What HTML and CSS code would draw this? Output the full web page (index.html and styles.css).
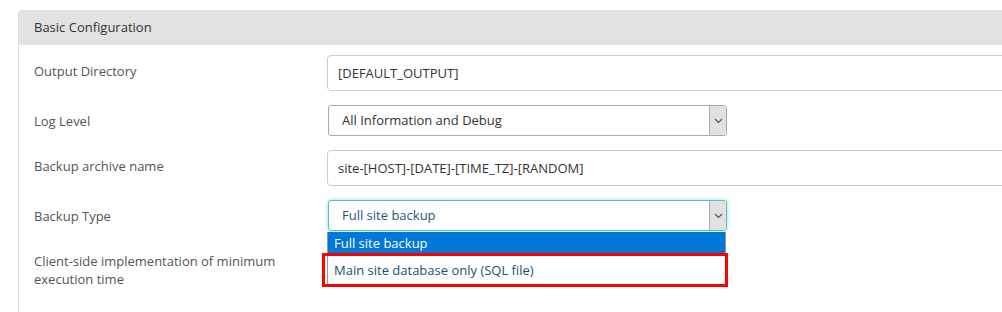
FILE: index.html
```html
<!DOCTYPE html>
<html lang="en">
<head>
    <meta charset="UTF-8">
    <title>Basic Configuration</title>
    <link rel="stylesheet" href="styles.css">
</head>
<body>
    <div class="panel">
        <div class="panel-heading">Basic Configuration</div>
        <div class="panel-body">
            <div class="form-row">
                <label class="form-label">Output Directory</label>
                <div class="form-control input-text">[DEFAULT_OUTPUT]</div>
            </div>
            <div class="form-row">
                <label class="form-label">Log Level</label>
                <div class="form-control select">
                    <span class="select-value">All Information and Debug</span>
                    <span class="select-arrow"><svg width="9" height="6" viewBox="0 0 9 6"><path d="M1 1 L4.5 4.5 L8 1" fill="none" stroke="#555" stroke-width="1.1"/></svg></span>
                </div>
            </div>
            <div class="form-row">
                <label class="form-label">Backup archive name</label>
                <div class="form-control input-text">site-[HOST]-[DATE]-[TIME_TZ]-[RANDOM]</div>
            </div>
            <div class="form-row">
                <label class="form-label">Backup Type</label>
                <div class="select-wrap">
                    <div class="form-control select focused">
                        <span class="select-value">Full site backup</span>
                        <span class="select-arrow"><svg width="9" height="6" viewBox="0 0 9 6"><path d="M1 1 L4.5 4.5 L8 1" fill="none" stroke="#555" stroke-width="1.1"/></svg></span>
                    </div>
                    <ul class="dropdown">
                        <li class="option selected">Full site backup</li>
                        <li class="option marked">Main site database only (SQL file)</li>
                    </ul>
                </div>
            </div>
            <div class="form-row">
                <label class="form-label">Client-side implementation of minimum execution time</label>
            </div>
        </div>
    </div>
</body>
</html>
```

FILE: styles.css
```css
* {
    margin: 0;
    padding: 0;
    box-sizing: border-box;
    font-family: 'Open Sans', 'Liberation Sans', sans-serif;
}

html, body {
    overflow: hidden;
}

body {
    background-color: #fff;
    padding: 10px 0 0 18px;
    height: 312px;
    font-size: 13px;
    color: #555;
}

.panel {
    width: 100%;
    height: 302px;
    border-left: 1px solid #ddd;
    border-top-left-radius: 4px;
    overflow: hidden;
}

.panel-heading {
    background-color: #e2e2e2;
    height: 35px;
    line-height: 35px;
    padding-left: 15px;
    color: #333;
}

.panel-body {
    padding: 10px 0 0 15px;
    display: flex;
    flex-direction: column;
    gap: 14px;
}

.form-row {
    display: flex;
    align-items: flex-start;
}

.form-label {
    width: 293px;
    flex-shrink: 0;
    padding: 7px 40px 0 0;
    line-height: 18px;
}

.form-control {
    border: 1px solid #ccc;
    border-radius: 4px;
    background: #fff;
    color: #333;
}

.input-text {
    width: 720px;
    flex-shrink: 0;
    height: 36px;
    line-height: 34px;
    padding-left: 10px;
}

.select-wrap {
    position: relative;
    margin-left: 1px;
}

.form-row > .select {
    margin-left: 1px;
}

.select {
    width: 399px;
    height: 31px;
    display: flex;
    border-color: #aaa;
    border-radius: 3px;
}

.select-value {
    flex: 1;
    line-height: 29px;
    padding-left: 13px;
}

.select-arrow {
    width: 17px;
    background: #e1e1e1;
    border-left: 1px solid #aaa;
    border-radius: 0 2px 2px 0;
    display: flex;
    align-items: center;
    justify-content: center;
}

.select.focused {
    border-color: #5bc0bc;
    box-shadow: 0 0 4px rgba(91, 192, 188, 0.6);
    color: #1f5676;
}

.dropdown {
    position: absolute;
    top: 32px;
    left: -1px;
    width: 399px;
    list-style: none;
    background: #fff;
    border-left: 1px solid #999;
    border-right: 1px solid #999;
}

.option {
    padding-left: 6px;
    color: #22506e;
}

.option.selected {
    background: #0078d7;
    color: #fff;
    height: 23px;
    line-height: 23px;
}

.option.marked {
    height: 30px;
    line-height: 30px;
    outline: 3px solid #f00;
    outline-offset: -1px;
    margin: 0 -1px 0 -4px;
    padding-left: 10px;
}
```
